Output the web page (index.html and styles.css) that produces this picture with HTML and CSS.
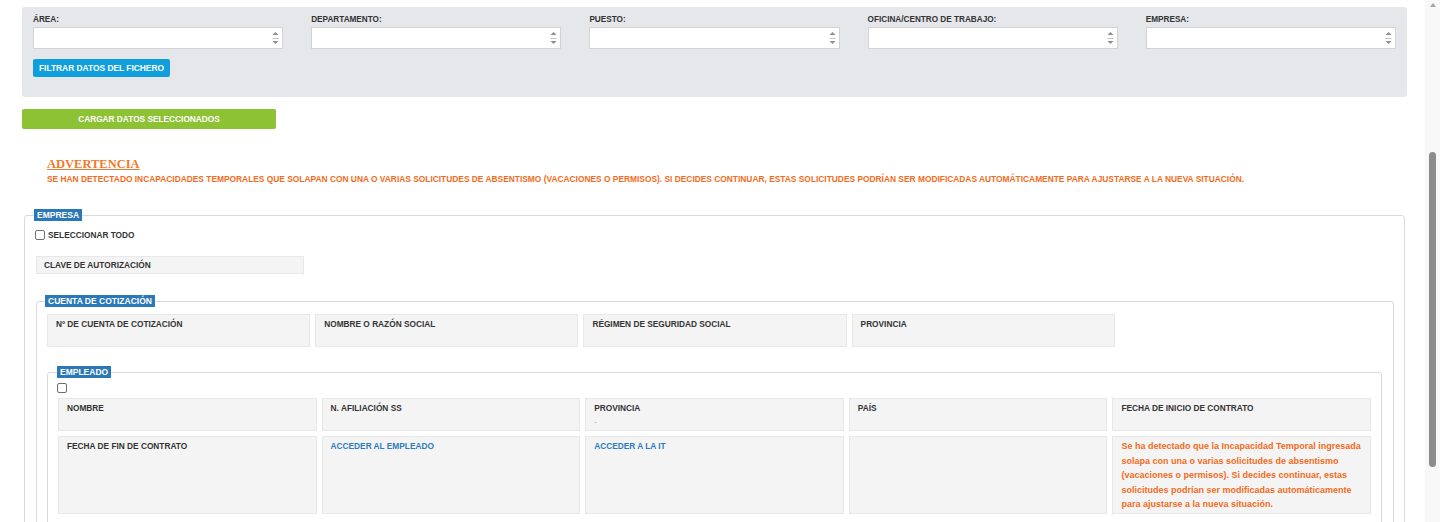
FILE: index.html
```html
<!DOCTYPE html>
<html lang="es">
<head>
<meta charset="utf-8">
<title>Cargar datos del fichero</title>
<link rel="stylesheet" href="styles.css">
</head>
<body>
<div class="screen">
<div class="page">

	<div class="filter_box">
		<div class="filter_grid">
			<div class="filter_field">
				<label>ÁREA:</label>
				<div class="multi"><svg class="spin" width="7" height="14" viewBox="0 0 7 14"><path d="M0.5 4 L3.5 1 L6.5 4 Z" fill="#8f8f8f"/><line x1="0.5" y1="7.5" x2="6.5" y2="7.5" stroke="#c4c4c4"/><path d="M0.5 10 L3.5 13 L6.5 10 Z" fill="#8f8f8f"/></svg></div>
			</div>
			<div class="filter_field">
				<label>DEPARTAMENTO:</label>
				<div class="multi"><svg class="spin" width="7" height="14" viewBox="0 0 7 14"><path d="M0.5 4 L3.5 1 L6.5 4 Z" fill="#8f8f8f"/><line x1="0.5" y1="7.5" x2="6.5" y2="7.5" stroke="#c4c4c4"/><path d="M0.5 10 L3.5 13 L6.5 10 Z" fill="#8f8f8f"/></svg></div>
			</div>
			<div class="filter_field">
				<label>PUESTO:</label>
				<div class="multi"><svg class="spin" width="7" height="14" viewBox="0 0 7 14"><path d="M0.5 4 L3.5 1 L6.5 4 Z" fill="#8f8f8f"/><line x1="0.5" y1="7.5" x2="6.5" y2="7.5" stroke="#c4c4c4"/><path d="M0.5 10 L3.5 13 L6.5 10 Z" fill="#8f8f8f"/></svg></div>
			</div>
			<div class="filter_field">
				<label>OFICINA/CENTRO DE TRABAJO:</label>
				<div class="multi"><svg class="spin" width="7" height="14" viewBox="0 0 7 14"><path d="M0.5 4 L3.5 1 L6.5 4 Z" fill="#8f8f8f"/><line x1="0.5" y1="7.5" x2="6.5" y2="7.5" stroke="#c4c4c4"/><path d="M0.5 10 L3.5 13 L6.5 10 Z" fill="#8f8f8f"/></svg></div>
			</div>
			<div class="filter_field">
				<label>EMPRESA:</label>
				<div class="multi"><svg class="spin" width="7" height="14" viewBox="0 0 7 14"><path d="M0.5 4 L3.5 1 L6.5 4 Z" fill="#8f8f8f"/><line x1="0.5" y1="7.5" x2="6.5" y2="7.5" stroke="#c4c4c4"/><path d="M0.5 10 L3.5 13 L6.5 10 Z" fill="#8f8f8f"/></svg></div>
			</div>
		</div>
		<button class="btn_filter">FILTRAR DATOS DEL FICHERO</button>
	</div>

	<button class="btn_load">CARGAR DATOS SELECCIONADOS</button>

	<div class="warning">
		<h3>ADVERTENCIA</h3>
		<p>SE HAN DETECTADO INCAPACIDADES TEMPORALES QUE SOLAPAN CON UNA O VARIAS SOLICITUDES DE ABSENTISMO (VACACIONES O PERMISOS). SI DECIDES CONTINUAR, ESTAS SOLICITUDES PODRÍAN SER MODIFICADAS AUTOMÁTICAMENTE PARA AJUSTARSE A LA NUEVA SITUACIÓN.</p>
	</div>

	<fieldset class="group group_empresa">
		<legend>EMPRESA</legend>
		<label class="check_row"><input type="checkbox" class="chk"> SELECCIONAR TODO</label>
		<div class="cell clave">CLAVE DE AUTORIZACIÓN</div>

		<fieldset class="group group_cuenta">
			<legend>CUENTA DE COTIZACIÓN</legend>
			<div class="cells">
				<div class="cell"><span class="lbl">Nº DE CUENTA DE COTIZACIÓN</span><span class="val"></span></div>
				<div class="cell"><span class="lbl">NOMBRE O RAZÓN SOCIAL</span><span class="val"></span></div>
				<div class="cell"><span class="lbl">RÉGIMEN DE SEGURIDAD SOCIAL</span><span class="val"></span></div>
				<div class="cell"><span class="lbl">PROVINCIA</span><span class="val"></span></div>
			</div>

			<fieldset class="group group_empleado">
				<legend>EMPLEADO</legend>
				<input type="checkbox" class="chk chk_emp">
				<div class="cells">
					<div class="cell"><span class="lbl">NOMBRE</span><span class="val"></span></div>
					<div class="cell"><span class="lbl">N. AFILIACIÓN SS</span><span class="val"></span></div>
					<div class="cell"><span class="lbl">PROVINCIA</span><span class="val dash">-</span></div>
					<div class="cell"><span class="lbl">PAÍS</span><span class="val"></span></div>
					<div class="cell"><span class="lbl">FECHA DE INICIO DE CONTRATO</span><span class="val"></span></div>
					<div class="cell"><span class="lbl">FECHA DE FIN DE CONTRATO</span><span class="val"></span></div>
					<div class="cell"><a class="lnk" href="#">ACCEDER AL EMPLEADO</a></div>
					<div class="cell"><a class="lnk" href="#">ACCEDER A LA IT</a></div>
					<div class="cell"></div>
					<div class="cell"><p class="cell_warn">Se ha detectado que la Incapacidad Temporal ingresada solapa con una o varias solicitudes de absentismo (vacaciones o permisos). Si decides continuar, estas solicitudes podrían ser modificadas automáticamente para ajustarse a la nueva situación.</p></div>
				</div>
			</fieldset>
		</fieldset>
	</fieldset>

</div>
<div class="scrollbar"><span class="sb_up"></span><span class="sb_thumb"></span></div>
</div>
</body>
</html>
```

FILE: styles.css
```css
* {margin: 0; padding: 0; box-sizing: border-box;}
body {font-family: "Liberation Sans", Arial, sans-serif; color: #333; background: #fff;}

.screen {display: flex; height: 522px; overflow: hidden;}
.page {flex: 1; min-width: 0; padding: 7px 18px 0 22px;}

/* filtros */
.filter_box {background: #e6e7eb; border-radius: 3px; padding: 7px 11px 20px 11px;}
.filter_grid {display: grid; grid-template-columns: repeat(5, 1fr); column-gap: 28px;}
.filter_field label {display: block; font-size: 8.2px; font-weight: bold; line-height: 12px; color: #333;}
.multi {height: 22px; margin-top: 1px; background: #fff; border: 1px solid #d3d3d6; display: flex; justify-content: flex-end; align-items: center; padding-right: 3px;}
.spin {display: block;}

.btn_filter {display: block; margin-top: 10px; height: 18px; padding: 0 6px; border: 0; border-radius: 2px; background: #0f9fdc; color: #fff; font-family: inherit; font-size: 8.4px; font-weight: bold;}
.btn_load {display: block; margin-top: 12px; width: 254px; height: 20px; border: 0; border-radius: 2px; background: #8dc234; color: #fff; font-family: inherit; font-size: 8.3px; font-weight: bold;}

/* advertencia */
.warning {margin-top: 28px; padding-left: 25px;}
.warning h3 {font-family: "Liberation Serif", "Times New Roman", serif; font-size: 12.5px; line-height: 15px; font-weight: bold; text-decoration: underline; color: #f07a2c;}
.warning p {margin-top: 2px; font-size: 8.4px; line-height: 11px; font-weight: bold; color: #f26b22;}

/* bloques */
.group {border: 1px solid #d9d9de; border-radius: 3px;}
.group legend {background: #2a78b8; color: #fff; font-size: 8.5px; font-weight: bold; line-height: 11px; padding: 1px 3px 0 3px;}
.group_empresa {margin: 24px 2px 0 2px; padding: 0 10px 60px 10px;}
.group_empresa > legend {margin-left: -1px;}
.group_cuenta {margin: 21px 0 0 1px; padding: 7px 10px 60px 10px;}
.group_cuenta > legend {margin-left: -2px;}
.group_empleado {margin: 19px 1px 0 0; padding: 5px 10px 60px 10px;}
.group_empleado > legend {margin-left: -1px;}

.check_row {display: flex; align-items: center; gap: 3px; margin-top: 9px; height: 10px; font-size: 8.3px; font-weight: bold; line-height: 10px;}
.chk {appearance: none; -webkit-appearance: none; width: 10px; height: 10px; border: 1px solid #6f6f6f; border-radius: 2px; background: #fff; display: block; flex: none;}
.chk_emp {margin-left: -1px;}

.cells {display: grid; grid-template-columns: repeat(5, 1fr); column-gap: 5px; row-gap: 5px;}
.group_empleado .cells {margin-top: 5px;}
.cell {background: #f4f4f4; border: 1px solid #e8e8e8; padding: 2px 8px 1px 8px; font-size: 8.3px; font-weight: bold; line-height: 14px; color: #333;}
.cell .lbl, .cell .val {display: block; min-height: 14px;}
.cell .dash {color: #f3a869; font-weight: normal;}
.clave {width: 268px; margin: 16px 0 0 1px; padding: 1px 7px;}
.lnk {color: #2b7bc0; text-decoration: none;}
.cell_warn {font-size: 9px; line-height: 14.5px; color: #f26b22;}

/* barra de scroll */
.scrollbar {width: 15px; background: #f8f8f8; display: flex; flex-direction: column; align-items: center;}
.sb_up {margin-top: 3px; width: 0; height: 0; border-left: 3.5px solid transparent; border-right: 3.5px solid transparent; border-bottom: 4px solid #a3a3a3;}
.sb_thumb {margin-top: 145px; width: 7px; height: 315px; border-radius: 4px; background: #8c8c8c;}
```
